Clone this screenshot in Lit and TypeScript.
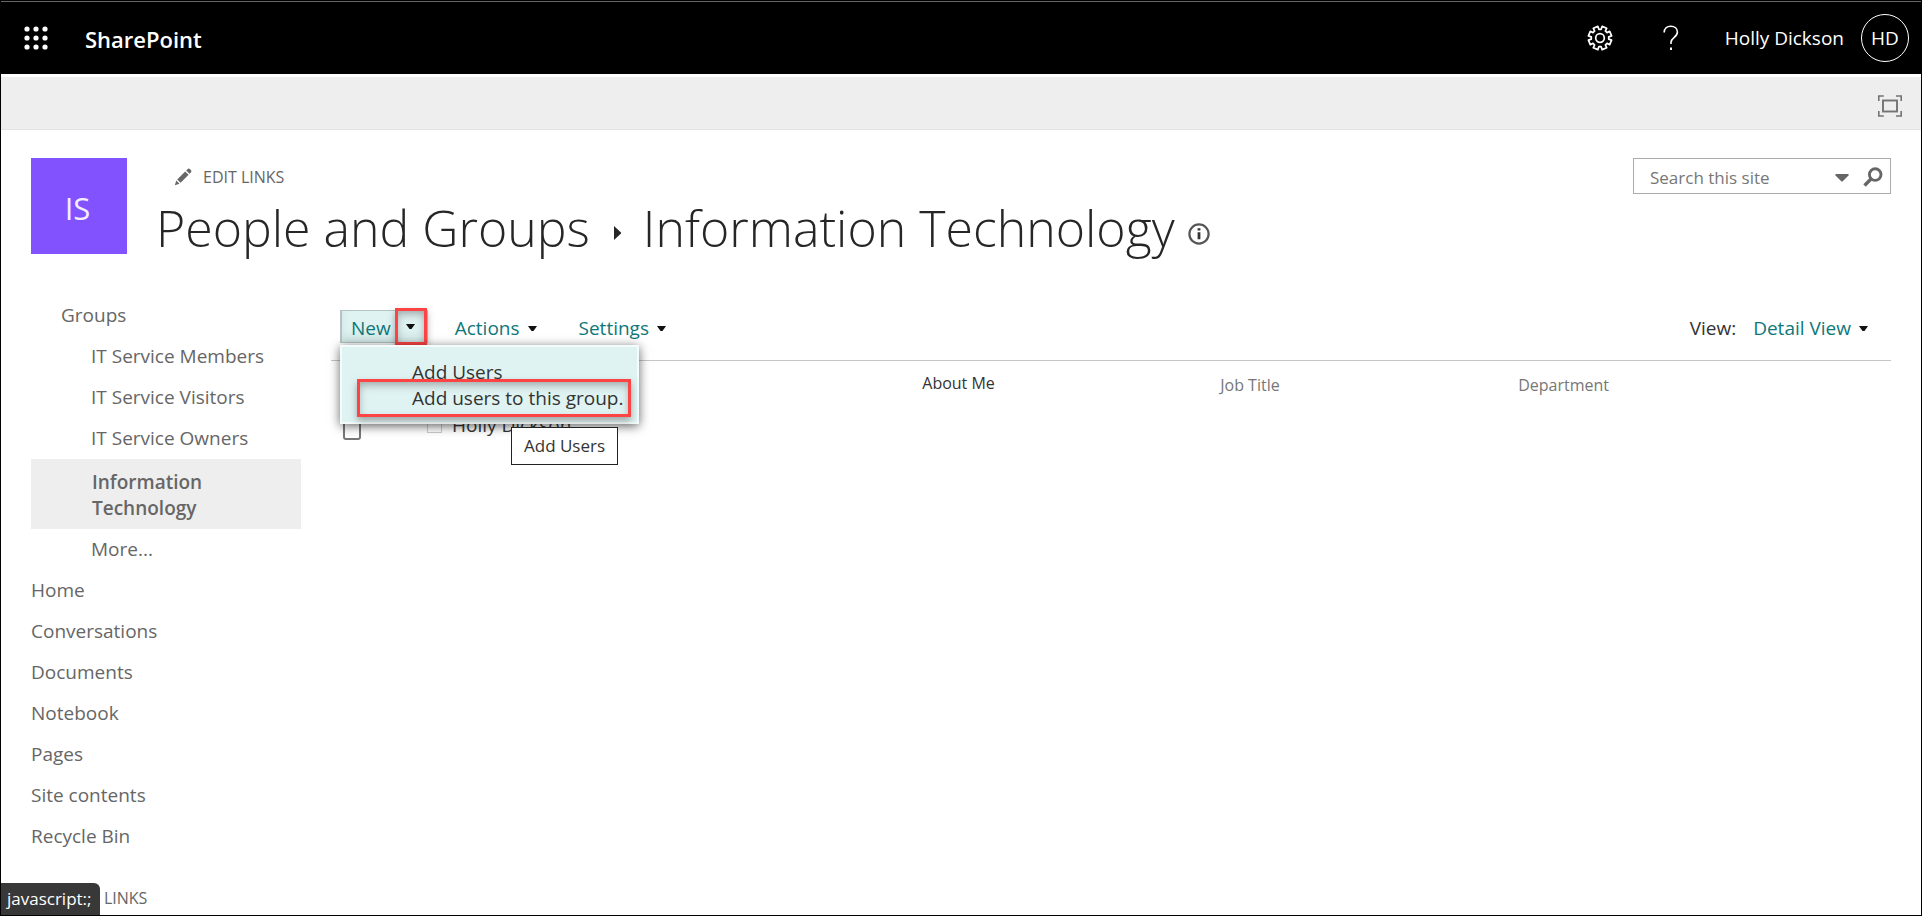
import { LitElement, html, css, svg } from "lit";
import { customElement, state } from "lit/decorators.js";
import { classMap } from "lit/directives/class-map.js";

interface NavItem {
  label: string;
  level: number;
  selected?: boolean;
}

const NAV: NavItem[] = [
  { label: "Groups", level: 1 },
  { label: "IT Service Members", level: 2 },
  { label: "IT Service Visitors", level: 2 },
  { label: "IT Service Owners", level: 2 },
  { label: "Information Technology", level: 2, selected: true },
  { label: "More...", level: 2 },
  { label: "Home", level: 0 },
  { label: "Conversations", level: 0 },
  { label: "Documents", level: 0 },
  { label: "Notebook", level: 0 },
  { label: "Pages", level: 0 },
  { label: "Site contents", level: 0 },
  { label: "Recycle Bin", level: 0 },
];

const waffle = html`<svg width="24" height="24" viewBox="0 0 24 24" fill="#fff" aria-hidden="true">
  ${[3, 12, 21].map((y) => [3, 12, 21].map((x) => svg`<circle cx=${x} cy=${y} r="2.6"></circle>`))}
</svg>`;

// Outline of an eight-toothed wheel around a centre point.
const gearPath = (() => {
  const pts: string[] = [];
  const at = (deg: number, r: number) => {
    const a = (deg * Math.PI) / 180;
    return `${(13 + r * Math.cos(a)).toFixed(2)} ${(13 + r * Math.sin(a)).toFixed(2)}`;
  };
  for (let i = 0; i < 8; i++) {
    const c = i * 45 + 22.5;
    pts.push(at(c - 15, 8.8), at(c - 12, 11.8), at(c + 12, 11.8), at(c + 15, 8.8));
  }
  return `M${pts.join("L")}Z`;
})();

const gear = html`<svg width="26" height="26" viewBox="0 0 26 26" fill="none" stroke="#fff" stroke-width="1.7" stroke-linejoin="round" aria-hidden="true">
  <path d=${gearPath}></path><circle cx="13" cy="13" r="4.3"></circle>
</svg>`;

const help = html`<svg width="16" height="26" viewBox="0 0 16 26" fill="none" stroke="#fff" stroke-width="1.6" aria-hidden="true">
  <path d="M1.2 7.5C1.2 3.6 4 1.2 7.8 1.2c3.900 0 6.600 2.300 6.600 5.800 0 5.400-6.400 5.600-6.400 10.200v1.800"></path>
  <path d="M8 22.500v2.400" stroke-width="2"></path>
</svg>`;

const pencil = html`<svg width="18" height="18" viewBox="0 0 18 18" fill="#666" aria-hidden="true">
  <path d="M.8 17.200l1.500-4.700 3.200 3.200zM3.200 11.400l8-8 3.400 3.400-8 8zM12.200 2.500l1.300-1.300c.8-.8 1.800-.8 2.600 0l.7.7c.8.8.8 1.700 0 2.500l-1.300 1.300z"></path>
</svg>`;

const focusIcon = html`<svg width="24" height="22" viewBox="0 0 24 22" fill="none" stroke="#737373" aria-hidden="true">
  <path d="M.8 6V1h5M18 1h5.200v5M23.200 16v5H18M5.800 21h-5v-5" stroke-width="1.600"></path>
  <rect x="5" y="5.500" width="14" height="11" stroke-width="1.900"></rect>
</svg>`;

const magnifier = html`<svg width="20" height="20" viewBox="0 0 20 20" fill="none" stroke="#666" aria-hidden="true">
  <circle cx="12.200" cy="7.600" r="5.800" stroke-width="2.900"></circle>
  <path d="M8 12L1.500 18.500" stroke-width="3.400"></path>
</svg>`;

const caret = html`<svg width="9" height="5" viewBox="0 0 9 5" fill="#111" aria-hidden="true"><path d="M0 0h9L5.500 5h-2z"></path></svg>`;

const bigCaret = html`<svg width="14" height="9" viewBox="0 0 14 9" fill="#666" aria-hidden="true"><path d="M.5 1h13v1.500L7.500 8.500h-1L.5 2.500z"></path></svg>`;

const arrowRight = html`<svg width="7" height="14" viewBox="0 0 7 14" fill="#262626" aria-hidden="true"><path d="M0 0l7 6.500v1L0 14z"></path></svg>`;

const info = html`<svg width="22" height="22" viewBox="0 0 22 22" fill="none" stroke="#555" aria-hidden="true">
  <circle cx="11" cy="11" r="9.600" stroke-width="2.200"></circle>
  <path d="M11 9.300v7M11 5.200v2.400" stroke="#333" stroke-width="2.800"></path>
</svg>`;

const shared = css`
  * {
    box-sizing: border-box;
  }
  button,
  input {
    font: inherit;
    color: inherit;
    background: none;
    border: 0;
    margin: 0;
    padding: 0;
  }
  a {
    color: inherit;
    text-decoration: none;
  }
  svg {
    display: block;
    flex: none;
  }
`;

@customElement("suite-bar")
export class SuiteBar extends LitElement {
  static styles = [
    shared,
    css`
      :host {
        display: block;
      }
      .bar {
        display: flex;
        align-items: center;
        height: 74px;
        padding: 2px 12px 0 23px;
        background: #000;
        color: #fff;
        background-image: linear-gradient(#000 1px, #666 1px, #666 2px, #000 2px);
      }
      .brand {
        margin-left: 37px;
        padding-top: 2px;
        font-size: 22px;
        font-weight: 600;
      }
      .tools {
        display: flex;
        align-items: center;
        margin-left: auto;
      }
      .help {
        margin-left: 50px;
      }
      .user {
        display: flex;
        align-items: center;
        gap: 17px;
        margin-left: 46px;
        font-size: 19px;
      }
      .avatar {
        display: grid;
        place-items: center;
        width: 48px;
        height: 48px;
        border: 1px solid #fff;
        border-radius: 50%;
      }
    `,
  ];

  render() {
    return html`<header class="bar">
      <button aria-label="App launcher">${waffle}</button>
      <a class="brand" href="#">SharePoint</a>
      <div class="tools">
        <button aria-label="Settings">${gear}</button>
        <button class="help" aria-label="Help">${help}</button>
        <button class="user"><span>Holly Dickson</span><span class="avatar">HD</span></button>
      </div>
    </header>`;
  }
}

@customElement("site-nav")
export class SiteNav extends LitElement {
  static styles = [
    shared,
    css`
      :host {
        display: block;
        color: #666;
        font-size: 19px;
      }
      ul {
        list-style: none;
        margin: 0;
        padding: 0;
      }
      .item {
        display: block;
        padding: 7px 0 8px;
        line-height: 26px;
      }
      .level1 {
        padding-left: 30px;
      }
      .level2 {
        padding-left: 60px;
      }
      .selected {
        padding: 10px 90px 8px 61px;
        background: #eee;
        font-weight: 600;
      }
      .edit {
        display: flex;
        align-items: center;
        gap: 11px;
        margin-top: 28px;
        padding-left: 6px;
        font-size: 16px;
        line-height: 26px;
      }
    `,
  ];

  render() {
    return html`<nav aria-label="Site">
      <ul>
        ${NAV.map(
          (n) => html`<li>
            <a class=${classMap({ item: true, [`level${n.level}`]: true, selected: !!n.selected })} href="#">${n.label}</a>
          </li>`
        )}
      </ul>
      <a class="edit" href="#">${pencil}<span>EDIT LINKS</span></a>
    </nav>`;
  }
}

@customElement("group-list")
export class GroupList extends LitElement {
  @state() private menuOpen = true;

  static styles = [
    shared,
    css`
      :host {
        display: block;
        font-size: 19px;
        color: #333;
      }
      .toolbar {
        display: flex;
        align-items: flex-start;
        height: 51px;
        padding: 0 23px 0 9px;
        border-bottom: 1px solid #c6c6c6;
        color: #0e7779;
      }
      .split {
        position: relative;
        display: flex;
        height: 33px;
        border: 1px solid #b5c3c3;
        border-left-width: 2px;
        background: #e0f3f3;
        box-shadow: inset 0 -6px 8px #cfe3e3;
      }
      .new {
        padding: 3px 4px 0 9px;
      }
      .drop {
        display: grid;
        place-items: center;
        width: 32px;
        margin: -3px 0;
      }
      .ring {
        outline: 3px solid #fc4444;
        outline-offset: -3px;
        box-shadow: 0 4px 7px #6668, inset 0 4px 8px 2px #6668;
      }
      .menu {
        position: absolute;
        z-index: 2;
        top: 34px;
        left: -2px;
        width: 299px;
        margin: 0;
        padding: 12px 6px 5px 15px;
        list-style: none;
        background: #e0f3f3;
        border: 2px solid #f3fbfb;
        box-shadow: 0 2px 10px #0009;
        color: #333;
      }
      .menu button {
        display: block;
        width: 100%;
        padding-left: 55px;
        line-height: 26px;
        text-align: left;
        white-space: nowrap;
      }
      .menu .marked {
        margin-top: -6px;
        line-height: 38px;
      }
      .tip {
        position: absolute;
        z-index: 3;
        top: 116px;
        left: 169px;
        padding: 0 12px;
        border: 1px solid #222;
        background: #fff;
        color: #333;
        font-size: 17px;
        line-height: 36px;
        white-space: nowrap;
      }
      .cmd {
        display: flex;
        align-items: center;
        gap: 8px;
        margin-left: 27px;
        line-height: 36px;
      }
      .cmd + .cmd {
        margin-left: 42px;
      }
      .view {
        display: flex;
        align-items: center;
        gap: 17px;
        margin-left: auto;
      }
      .view .cmd {
        margin-left: 0;
      }
      .view label {
        color: #333;
      }
      table {
        width: 100%;
        table-layout: fixed;
        border-collapse: collapse;
      }
      th {
        padding: 4px 0 0;
        height: 43px;
        font-size: 16px;
        font-weight: 400;
        text-align: left;
        color: #777;
      }
      th.strong {
        padding: 0;
        color: #333;
      }
      td {
        height: 42px;
        padding: 0;
      }
      .pick {
        width: 96px;
        padding-left: 12px;
      }
      .who {
        width: auto;
      }
      .field {
        width: 19.1%;
      }
      .last {
        width: 23.9%;
      }
      .box {
        appearance: none;
        display: block;
        width: 18px;
        height: 19px;
        border: 2px solid #777;
        border-radius: 3px;
        margin-top: 10px;
      }
      .person {
        display: flex;
        align-items: center;
        gap: 10px;
      }
      .presence {
        width: 15px;
        height: 15px;
        border: 1px solid #ccc;
      }
    `,
  ];

  private toggle() {
    this.menuOpen = !this.menuOpen;
  }

  render() {
    return html`<div class="toolbar">
        <div class="split">
          <button class="new">New</button>
          <button class="drop ring" aria-label="Open the New menu" aria-expanded=${this.menuOpen} @click=${this.toggle}>${caret}</button>
          ${this.menuOpen
            ? html`<ul class="menu">
                  <li><button>Add Users</button></li>
                  <li><button class="marked ring">Add users to this group.</button></li>
                </ul>
                <div class="tip" role="tooltip">Add Users</div>`
            : null}
        </div>
        <button class="cmd">Actions ${caret}</button>
        <button class="cmd">Settings ${caret}</button>
        <div class="view">
          <label for="view">View:</label>
          <button id="view" class="cmd">Detail View ${caret}</button>
        </div>
      </div>
      <table>
        <thead>
          <tr>
            <th class="pick"></th>
            <th class="who"></th>
            <th class="field strong">About Me</th>
            <th class="field">Job Title</th>
            <th class="last">Department</th>
          </tr>
        </thead>
        <tbody>
          <tr>
            <td class="pick"><input class="box" type="checkbox" aria-label="Select Holly Dickson" /></td>
            <td><a class="person" href="#"><span class="presence"></span>Holly Dickson</a></td>
            <td></td>
            <td></td>
            <td></td>
          </tr>
        </tbody>
      </table>`;
  }
}

@customElement("app-root")
export class AppRoot extends LitElement {
  static styles = [
    shared,
    css`
      :host {
        display: block;
        position: relative;
        box-sizing: border-box;
        height: 100vh;
        overflow: hidden;
        border: 1px solid #000;
        border-top: 0;
        background: #fff;
        font-family: "Open Sans", "Noto Sans", sans-serif;
      }
      .ribbon {
        display: flex;
        align-items: center;
        justify-content: flex-end;
        height: 53px;
        margin-top: 3px;
        padding: 5px 19px 0;
        background: #eee;
        border-bottom: 1px solid #e3e3e3;
      }
      .head {
        display: flex;
        align-items: flex-start;
        padding: 28px 30px 0;
      }
      .logo {
        display: grid;
        place-items: center;
        width: 96px;
        height: 96px;
        padding: 3px 3px 0 0;
        background: #8352ff;
        color: #f3eeff;
        font-size: 31px;
      }
      .titles {
        flex: 1;
        padding-left: 29px;
      }
      .edit {
        display: flex;
        align-items: center;
        gap: 11px;
        height: 38px;
        padding-left: 18px;
        color: #666;
        font-size: 16px;
      }
      h1 {
        display: flex;
        align-items: center;
        margin: 0;
        font-size: 50px;
        font-weight: 300;
        line-height: 64px;
        color: #262626;
      }
      .crumb {
        padding: 9px 22px 0 24px;
      }
      .info {
        padding: 12px 0 0 13px;
      }
      .search {
        display: flex;
        align-items: center;
        width: 258px;
        height: 36px;
        padding: 2px 7px 0 16px;
        border: 1px solid #ababab;
        color: #777;
        font-size: 17px;
      }
      .search input {
        flex: 1;
        min-width: 0;
        outline: 0;
      }
      .search input::placeholder {
        color: #777;
        opacity: 1;
      }
      .scope {
        margin-right: 14px;
      }
      .body {
        display: grid;
        grid-template-columns: 270px minmax(0, 1fr);
        gap: 30px;
        padding: 35px 30px 0;
      }
      .status {
        position: absolute;
        left: 0;
        bottom: 0;
        padding: 0 8px 0 6px;
        border-top-right-radius: 6px;
        background: #383838;
        color: #fff;
        font-size: 17px;
        line-height: 32px;
      }
      .main {
        padding-top: 15px;
      }
    `,
  ];

  render() {
    return html`
      <suite-bar></suite-bar>
      <div class="ribbon"><button aria-label="Focus on content">${focusIcon}</button></div>
      <div class="head">
        <a class="logo" href="#">IS</a>
        <div class="titles">
          <a class="edit" href="#">${pencil}<span>EDIT LINKS</span></a>
          <h1>
            <span>People and Groups</span><span class="crumb">${arrowRight}</span><span>Information Technology</span
            ><span class="info">${info}</span>
          </h1>
        </div>
        <form class="search" role="search">
          <input type="text" placeholder="Search this site" aria-label="Search this site" />
          <button class="scope" type="button" aria-label="Search scope">${bigCaret}</button>
          <button type="button" aria-label="Search">${magnifier}</button>
        </form>
      </div>
      <div class="body">
        <site-nav></site-nav>
        <main class="main"><group-list></group-list></main>
      </div>
      <div class="status" role="status">javascript:;</div>
    `;
  }
}
